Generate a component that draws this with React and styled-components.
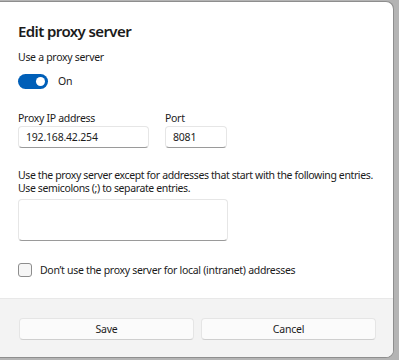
import React from 'react';
import styled, { createGlobalStyle } from 'styled-components';

const GlobalStyle = createGlobalStyle`
    html, body {
        margin: 0;
        padding: 0;
        background: #b4b4b4;
    }
    body {
        font-family: "Noto Sans", "Open Sans", sans-serif;
        color: #1b1b1b;
    }
`;

const Dialog = styled.div`
    width: 393px;
    height: 355px;
    margin-top: 1px;
    background-color: #fff;
    border: 1px solid #8e8e8e;
    border-left: none;
    border-radius: 0 8px 8px 0;
    overflow: hidden;
    display: flex;
    flex-direction: column;
`;

const Content = styled.div`
    padding: 19px 18px 0 18px;
    display: flex;
    flex-direction: column;
    height: 296px;
    box-sizing: border-box;
`;

const Title = styled.h2`
    margin: 0;
    font-size: 15px;
    line-height: 20px;
    font-weight: 600;
    letter-spacing: -0.6px;
`;

const Text = styled.div`
    font-size: 10.5px;
    line-height: ${p => p.$lh || 16}px;
    margin-top: ${p => p.$mt || 0}px;
    letter-spacing: ${p => p.$ls ?? -0.3}px;
    white-space: nowrap;
`;

const ToggleRow = styled.div`
    display: flex;
    align-items: center;
    gap: 10px;
    margin-top: 8px;
    height: 16px;
`;

const Toggle = styled.div`
    width: 30px;
    height: 15px;
    border-radius: 8px;
    background-color: #005fb8;
    display: flex;
    align-items: center;
    justify-content: flex-end;
    padding-right: 3px;
    box-sizing: border-box;

    &::after {
        content: '';
        width: 9px;
        height: 9px;
        border-radius: 50%;
        background-color: #fff;
    }
`;

const Fields = styled.div`
    display: flex;
    gap: 16px;
    margin-top: 21px;
`;

const Field = styled.div`
    display: flex;
    flex-direction: column;
`;

const Input = styled.div`
    width: ${p => p.$w}px;
    height: ${p => p.$h || 22}px;
    box-sizing: border-box;
    border: 1px solid #e6e6e6;
    border-bottom-color: #9a9a9a;
    border-radius: 4px;
    background-color: #fff;
    padding: 0 7px;
    font-size: 10.5px;
    letter-spacing: -0.2px;
    line-height: 20px;
    margin-top: ${p => p.$mt || 0}px;
`;

const CheckRow = styled.div`
    display: flex;
    align-items: center;
    gap: 8px;
    margin-top: 22px;
    font-size: 10.5px;
    letter-spacing: -0.3px;
`;

const Checkbox = styled.div`
    width: 14px;
    height: 14px;
    box-sizing: border-box;
    border: 1px solid #8d8d8d;
    border-radius: 3px;
    background-color: #f6f6f6;
`;

const Footer = styled.div`
    flex: 1;
    background-color: #f3f3f3;
    border-top: 1px solid #e8e8e8;
    padding: 19px 17px 0 19px;
    display: flex;
    gap: 7px;
    align-items: flex-start;
`;

const Button = styled.button`
    flex: 1;
    height: 22px;
    border: 1px solid #e5e5e5;
    border-bottom-color: #cfcfcf;
    border-radius: 4px;
    background-color: #fbfbfb;
    font-family: inherit;
    font-size: 10.5px;
    letter-spacing: -0.2px;
    color: #1b1b1b;
    padding: 0;
`;

const App = () => {
    return (
        <>
            <GlobalStyle />
            <Dialog>
                <Content>
                    <Title>Edit proxy server</Title>
                    <Text $mt={8}>Use a proxy server</Text>
                    <ToggleRow>
                        <Toggle />
                        <Text>On</Text>
                    </ToggleRow>
                    <Fields>
                        <Field>
                            <Text>Proxy IP address</Text>
                            <Input $w={131}>192.168.42.254</Input>
                        </Field>
                        <Field>
                            <Text>Port</Text>
                            <Input $w={62}>8081</Input>
                        </Field>
                    </Fields>
                    <Text $mt={21} $lh={13} $ls={-0.38}>
                        Use the proxy server except for addresses that start with the following entries.
                        <br />
                        Use semicolons (;) to separate entries.
                    </Text>
                    <Input $w={210} $h={42} $mt={4} />
                    <CheckRow>
                        <Checkbox />
                        Don’t use the proxy server for local (intranet) addresses
                    </CheckRow>
                </Content>
                <Footer>
                    <Button>Save</Button>
                    <Button>Cancel</Button>
                </Footer>
            </Dialog>
        </>
    );
};

export default App;
